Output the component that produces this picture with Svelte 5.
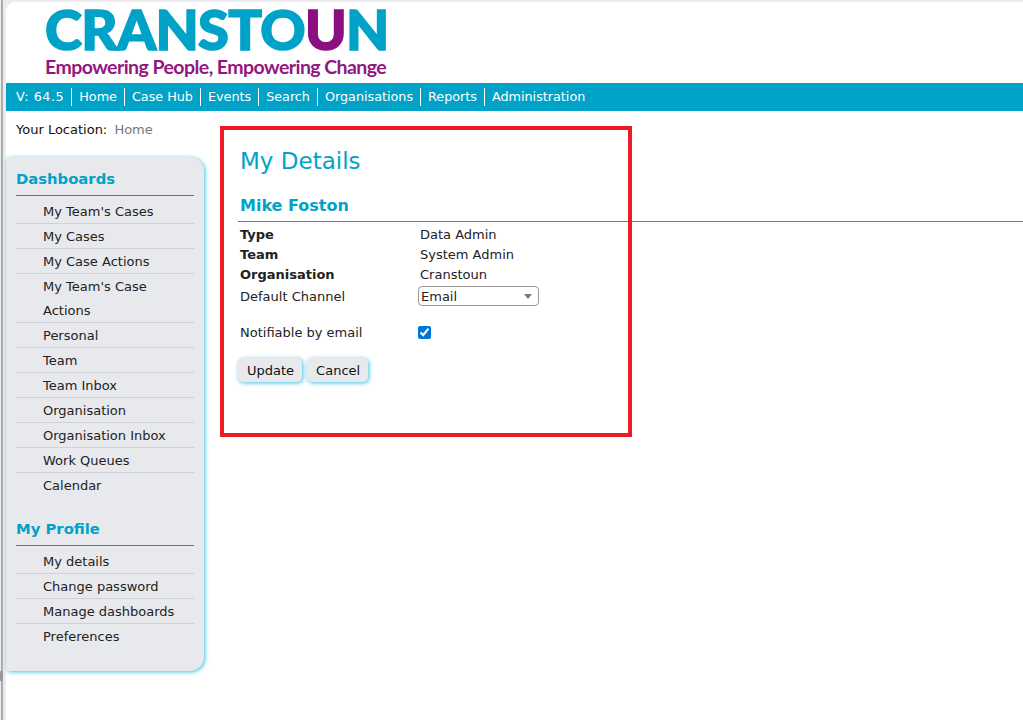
<script>
  const nav = ['V: 64.5', 'Home', 'Case Hub', 'Events', 'Search', 'Organisations', 'Reports', 'Administration'];
  const dashboards = ["My Team's Cases", 'My Cases', 'My Case Actions', "My Team's Case Actions", 'Personal', 'Team', 'Team Inbox', 'Organisation', 'Organisation Inbox', 'Work Queues', 'Calendar'];
  const profile = ['My details', 'Change password', 'Manage dashboards', 'Preferences'];
  const facts = [['Type', 'Data Admin'], ['Team', 'System Admin'], ['Organisation', 'Cranstoun']];
</script>

<div class="page">
  <div class="sheet">
    <header class="logo">
      <div class="word">CRANSTO<span>U</span>N</div>
      <div class="tag">Empowering People, Empowering Change</div>
    </header>
    <nav class="nav">
      {#each nav as item}<span>{item}</span>{/each}
    </nav>
    <div class="body">
      <aside>
        <div class="crumb">Your Location: <em>Home</em></div>
        <div class="panel">
          <h3>Dashboards</h3>
          <ul>{#each dashboards as d}<li>{d}</li>{/each}</ul>
          <h3 class="second">My Profile</h3>
          <ul>{#each profile as d}<li>{d}</li>{/each}</ul>
        </div>
      </aside>
      <main>
        <h1>My Details</h1>
        <h2>Mike Foston</h2>
        <div class="facts">
          {#each facts as f}<b>{f[0]}</b><span>{f[1]}</span>{/each}
        </div>
        <div class="row channel">
          <label for="ch">Default Channel</label>
          <div id="ch" class="select">Email<i></i></div>
        </div>
        <div class="row notify">
          <label for="nt">Notifiable by email</label>
          <input id="nt" type="checkbox" checked />
        </div>
        <div class="buttons"><button>Update</button><button>Cancel</button></div>
      </main>
    </div>
    <div class="callout"></div>
  </div>
</div>

<style>
  :global(body) { margin: 0; background: #fff; }
  .page { height: 720px; padding-top: 2px; box-sizing: border-box; overflow: hidden; font: 13px "DejaVu Sans", Verdana, sans-serif; color: #222; background: linear-gradient(#999, #999) 0 671px / 3px 10px no-repeat, linear-gradient(to right, #ececec 1px, #ababab 1px, #ababab 3px, #ececec 3px); }
  .sheet { position: relative; margin-left: 6px; height: 718px; border-radius: 9px 0 0 0; background: #fff; }
  .logo { height: 81px; padding-left: 39px; box-sizing: border-box; }
  .word { font: 900 56px/48px Lato, sans-serif; color: #00a3c7; letter-spacing: -0.7px; height: 50px; padding-top: 3px; box-sizing: content-box; -webkit-text-stroke: 1.6px currentColor; white-space: nowrap; }
  .word span { color: #8b0f80; }
  .tag { font: 700 19.5px/22px Lato, sans-serif; color: #93177f; margin-top: 1px; letter-spacing: -0.56px; white-space: nowrap; }
  .nav { display: flex; height: 28px; align-items: center; background: #00a3c7; color: #fff; padding-left: 3px; font-size: 12.75px; }
  .nav span { padding: 0 7px; line-height: 18px; border-left: 1px solid #fff; }
  .nav span:first-child { border-left: 0; letter-spacing: 0.55px; }
  .body { display: flex; }
  aside { width: 198px; flex: none; }
  .crumb { padding: 11px 0 0 10px; height: 35px; box-sizing: content-box; color: #111; }
  .crumb em { font-style: normal; color: #777; margin-left: 3px; }
  .panel { height: 514px; box-sizing: border-box; background: #e8e9ed; border-radius: 4px 14px 14px 4px; box-shadow: 1px 1px 4px #3fbfe0; padding: 12px 10px 0 10px; }
  h3 { margin: 0; font-size: 14.8px; line-height: 19px; color: #00a3c7; padding-bottom: 7px; border-bottom: 1px solid #2a8fa8; }
  h3.second { margin-top: 22px; }
  ul { list-style: none; margin: 0; padding: 2px 0 0; }
  li { padding: 1px 0 0 27px; margin-bottom: -1px; line-height: 24px; border-top: 1px solid #d0d1d6; }
  li:first-child { border-top-color: transparent; }
  main { flex: 1; padding-top: 35px; min-width: 0; margin-left: 34px; }
  h1 { margin: 0 0 0 2px; font-size: 23px; font-weight: 400; line-height: 30px; color: #00a3c7; }
  h2 { margin: 18px 0 0 0; padding: 0 0 4px 2px; font-size: 16px; line-height: 23px; color: #00a3c7; border-bottom: 1px solid #4a8a9a; }
  .facts { display: grid; grid-template-columns: 180px 1fr; line-height: 20px; padding: 3px 0 0 2px; }
  .row { display: flex; align-items: center; padding-left: 2px; }
  .row label { width: 178px; }
  .channel { margin-top: 1px; }
  .select { position: relative; height: 18px; width: 117px; border: 1px solid #999; border-radius: 4px; line-height: 20px; padding-left: 2px; box-sizing: content-box; background: #fff; }
  .select i { position: absolute; right: 6px; top: 7px; border: 4px solid transparent; border-top: 5px solid #777; border-bottom: 0; }
  .notify { margin-top: 19px; }
  .notify input { margin: 0; width: 13px; height: 13px; accent-color: #0075d9; }
  .buttons { display: flex; gap: 5px; margin-top: 18px; }
  button { font: inherit; color: #111; height: 24px; padding: 0 8px 0 9px; border: 0; border-radius: 5px; background: #e8e9ed; box-shadow: 1px 1px 4px #3fbfe0; }
  .callout { position: absolute; left: 214px; top: 124px; width: 404px; height: 303px; border: 4px solid #ec1c24; }
</style>
